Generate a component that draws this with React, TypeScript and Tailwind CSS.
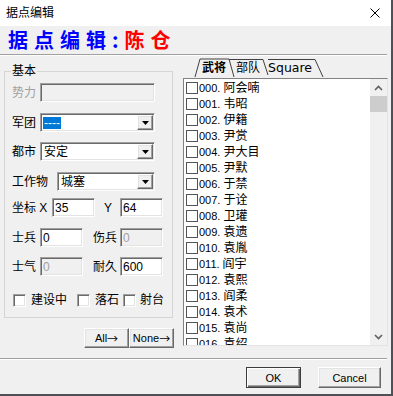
import React from "react";

const lat = "font-['Liberation_Sans','Noto_Sans_CJK_SC',sans-serif]";
const cjk = "font-['Noto_Sans_CJK_SC',sans-serif]";

const sunken =
  "border border-t-[#a0a0a0] border-l-[#a0a0a0] border-r-white border-b-white shadow-[inset_1px_1px_0_#696969,inset_-1px_-1px_0_#e3e3e3]";
const raised =
  "border border-t-white border-l-white border-r-[#696969] border-b-[#696969] shadow-[inset_-1px_-1px_0_#a0a0a0,inset_1px_1px_0_#e3e3e3] bg-[#f0f0f0]";

const generals = [
  "阿会喃", "韦昭", "伊籍", "尹赏", "尹大目", "尹默", "于禁", "于诠", "卫瓘",
  "袁遗", "袁胤", "阎宇", "袁熙", "阎柔", "袁术", "袁尚", "袁绍",
];

function Field({ value, width, disabled }: { value?: string; width: string; disabled?: boolean }) {
  return (
    <div
      className={`${sunken} ${width} h-[19px] flex items-center pl-[2px] text-[12px] leading-[14px] ${
        disabled ? "bg-[#f0f0f0] text-[#a0a0a0]" : "bg-white text-black"
      }`}
    >
      {value}
    </div>
  );
}

function Select({ value, width, selected }: { value: string; width: string; selected?: boolean }) {
  return (
    <div className={`${sunken} ${width} h-[19px] bg-white flex items-center justify-between pl-[2px] pr-[1px]`}>
      <span
        className={`text-[12px] leading-[12px] px-[1px] ${
          selected ? "bg-[#0078d7] text-white" : "text-black"
        }`}
      >
        {value}
      </span>
      <span className={`${raised} w-[16px] h-[15px] flex items-center justify-center`}>
        <svg width="7" height="4" viewBox="0 0 7 4">
          <polygon points="0,0 7,0 3.5,4" fill="#000" />
        </svg>
      </span>
    </div>
  );
}

function Check() {
  return <span className={`${sunken} block w-[13px] h-[13px] bg-white`} />;
}

function Chevron({ down }: { down?: boolean }) {
  return (
    <svg width="9" height="6" viewBox="0 0 9 6">
      <polyline
        points={down ? "1,1 4.5,4.5 8,1" : "1,5 4.5,1.5 8,5"}
        fill="none"
        stroke="#606060"
        strokeWidth="1.6"
      />
    </svg>
  );
}

export default function App() {
  return (
    <div className={`w-[393px] h-[396px] bg-[#4d5157] ${lat} text-[12px] text-black`}>
      <div className="w-[391px] h-[394px] bg-[#f0f0f0] flex flex-col">
        {/* title bar */}
        <div className="h-[26px] bg-white flex items-center justify-between pl-[6px] pr-[11px]">
          <span className="text-[12px] leading-[14px]">据点编辑</span>
          <svg width="10" height="10" viewBox="0 0 10 10">
            <path d="M0.5 0.5 L9.5 9.5 M9.5 0.5 L0.5 9.5" stroke="#000" strokeWidth="1" />
          </svg>
        </div>

        {/* heading */}
        <div className="h-[28px] flex items-center pl-[8px]">
          <span className={`${cjk} text-[20px] leading-[24px] font-bold tracking-[6px] text-[#0000ff]`}>据点编辑:</span>
          <span className={`${cjk} text-[20px] leading-[24px] font-bold tracking-[6px] text-[#ff0000]`}>陈仓</span>
        </div>
        <div className="h-[2px] border-t border-t-[#a0a0a0] border-b border-b-white mr-[4px]" />

        {/* main */}
        <div className="h-[302px] flex">
          {/* left column */}
          <div className="w-[183px] flex flex-col">
            <div className="relative mt-[15px] ml-[4px] w-[169px] h-[247px] border border-[#d5d5d5]">
              <span className="absolute -top-[8px] left-[6px] px-[1px] bg-[#f0f0f0] leading-[14px]">基本</span>
              <div className="flex flex-col pl-[7px]">
                <div className="mt-[11px] flex items-center">
                  <span className="w-[28px] text-[#a0a0a0]">势力</span>
                  <Field width="w-[115px]" disabled />
                </div>
                <div className="mt-[11px] flex items-center">
                  <span className="w-[28px]">军团</span>
                  <Select width="w-[115px]" value="----" selected />
                </div>
                <div className="mt-[10px] flex items-center">
                  <span className="w-[28px]">都市</span>
                  <Select width="w-[115px]" value="安定" />
                </div>
                <div className="mt-[11px] flex items-center">
                  <span className="w-[45px]">工作物</span>
                  <Select width="w-[98px]" value="城塞" />
                </div>
                <div className="mt-[7px] flex items-center">
                  <span className="w-[40px]">坐标 X</span>
                  <Field width="w-[43px]" value="35" />
                  <span className="ml-[9px] w-[16px]">Y</span>
                  <Field width="w-[43px]" value="64" />
                </div>
                <div className="mt-[11px] flex items-center">
                  <span className="w-[28px]">士兵</span>
                  <Field width="w-[43px]" value="0" />
                  <span className="ml-[10px] w-[27px]">伤兵</span>
                  <Field width="w-[43px]" value="0" disabled />
                </div>
                <div className="mt-[10px] flex items-center">
                  <span className="w-[28px]">士气</span>
                  <Field width="w-[43px]" value="0" disabled />
                  <span className="ml-[10px] w-[27px]">耐久</span>
                  <Field width="w-[43px]" value="600" />
                </div>
                <div className="mt-[15px] flex items-center pl-[1px]">
                  <Check />
                  <span className="ml-[5px]">建设中</span>
                  <span className="ml-[10px]"><Check /></span>
                  <span className="ml-[5px]">落石</span>
                  <span className="ml-[4px]"><Check /></span>
                  <span className="ml-[4px]">射台</span>
                </div>
              </div>
            </div>
            <div className="mt-[10px] ml-[84px] flex">
              <button className={`${raised} w-[45px] h-[20px] text-[11px] leading-[12px] flex items-center justify-center`}>
                All<span className={`${cjk} text-[11px]`}>→</span>
              </button>
              <button className={`${raised} w-[45px] h-[20px] text-[11px] leading-[12px] flex items-center justify-center`}>
                None<span className={`${cjk} text-[11px]`}>→</span>
              </button>
            </div>
          </div>

          {/* right column */}
          <div className="w-[205px] flex flex-col">
            <div className="relative mt-[2px] h-[20px] flex items-center">
              <svg className="absolute inset-0" width="205" height="20" viewBox="0 0 205 20">
                <polyline points="12,19 17,1 46,1 51,19" fill="none" stroke="#404040" strokeWidth="1" />
                <polyline points="46,1.5 80,1.5 85,17" fill="none" stroke="#404040" strokeWidth="1" />
                <polyline points="85,1.5 132,1.5 140,19" fill="none" stroke="#404040" strokeWidth="1" />
              </svg>
              <span className="relative ml-[19px] font-bold leading-[14px]">武将</span>
              <span className="relative ml-[10px] leading-[14px]">部队</span>
              <span className="relative ml-[8px] font-['DejaVu_Sans',sans-serif] text-[12.5px] leading-[14px]">Square</span>
            </div>
            <div className="h-[268px] flex border border-t-[#828282] border-l-[#828282] border-r-[#e3e3e3] border-b-[#e3e3e3] bg-white">
              <div className="flex-1 overflow-hidden pt-[1px]">
                {generals.map((name, i) => (
                  <div key={name} className="h-[16px] flex items-center">
                    <span className="ml-[2px] w-[12px] h-[12px] border border-[#555] bg-white" />
                    <span className="ml-[1px] text-[11px] leading-[14px]">{String(i).padStart(3, "0")}.</span>
                    <span className="ml-[3px] text-[12px] leading-[14px]">{name}</span>
                  </div>
                ))}
              </div>
              <div className="w-[17px] bg-[#f0f0f0] flex flex-col">
                <div className="h-[17px] flex items-center justify-center">
                  <Chevron />
                </div>
                <div className="h-[16px] bg-[#cdcdcd]" />
                <div className="flex-1" />
                <div className="h-[17px] flex items-center justify-center">
                  <Chevron down />
                </div>
              </div>
            </div>
          </div>
        </div>

        <div className="h-[2px] border-t border-t-[#a0a0a0] border-b border-b-white mr-[4px]" />

        {/* bottom buttons */}
        <div className="flex pl-[246px] pt-[7px]">
          <button className="w-[55px] h-[21px] border border-[#3c3c3c] bg-[#f0f0f0] shadow-[inset_1px_1px_0_#ffffff,inset_-1px_-1px_0_#696969,inset_-2px_-2px_0_#a0a0a0] text-[11px] leading-[12px]">
            OK
          </button>
          <button className={`${raised} ml-[17px] w-[63px] h-[21px] text-[11px] leading-[12px]`}>Cancel</button>
        </div>
      </div>
    </div>
  );
}
